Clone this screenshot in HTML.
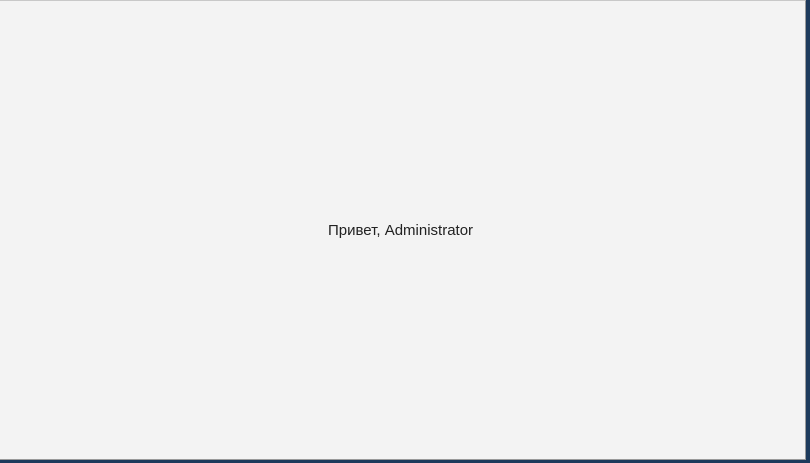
<!DOCTYPE html><html><head><style>
html,body{margin:0;padding:0;width:810px;height:463px;overflow:hidden;background:#1d3a5c;}
.w{position:absolute;left:0;top:0;width:806px;height:460px;background:#f3f3f3;border-top:1px solid #c8c8c8;border-right:1px solid #9a9a9a;border-bottom:1px solid #9a9a9a;box-sizing:border-box;}
.t{position:absolute;left:328px;top:222px;font:15px "Liberation Sans",sans-serif;color:#222;white-space:nowrap;}
</style></head><body><div class="w"></div><div class="t">Привет, Administrator</div></body></html>
